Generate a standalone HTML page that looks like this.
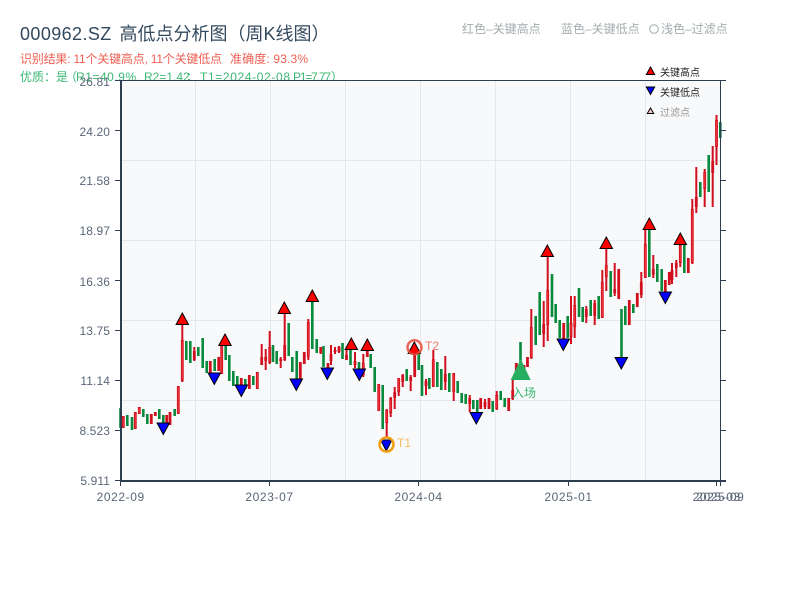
<!DOCTYPE html>
<html><head><meta charset="utf-8"><style>
html,body{margin:0;padding:0;background:#fff;width:800px;height:600px;overflow:hidden}
svg{display:block}
text{font-family:"Liberation Sans","Noto Sans CJK SC",sans-serif}
</style></head><body>
<svg width="800" height="600" viewBox="0 0 800 600" xmlns="http://www.w3.org/2000/svg">
<rect width="800" height="600" fill="#fff"/>
<text x="20" y="40" font-size="18" fill="#34495e" letter-spacing=".4">000962.SZ</text>
<text x="119.500" y="40" font-size="18" fill="#34495e">高低点分析图（周K线图）</text>
<text x="20" y="63" font-size="12" fill="#ee5f52" textLength="202">识别结果: 11个关键高点, 11个关键低点</text>
<text x="230" y="63" font-size="12" fill="#ee5f52" textLength="78">准确度: 93.3%</text>
<text x="20" y="81" font-size="12" fill="#3bb873">优质：是</text>
<text x="65" y="81" font-size="12" fill="#3bb873">（</text>
<text x="76" y="81" font-size="12" fill="#3bb873" textLength="64">R1=40.9%,</text>
<text x="144" y="81" font-size="12" fill="#3bb873">R2=1.42</text>
<text x="186" y="81" font-size="12" fill="#3bb873">；</text>
<text x="200" y="81" font-size="12" fill="#3bb873" textLength="90">T1=2024-02-08</text>
<text x="293" y="81" font-size="12" fill="#3bb873" textLength="38">P1=7.77</text>
<text x="331" y="81" font-size="12" fill="#3bb873">）</text>
<text x="462" y="33" font-size="12" fill="#a3adae">红色–关键高点</text>
<text x="561" y="33" font-size="12" fill="#a3adae">蓝色–关键低点</text>
<circle cx="654" cy="29" r="4.300" fill="none" stroke="#a3adae"/>
<text x="661" y="33" font-size="12" fill="#a3adae">浅色–过滤点</text>

<rect x="121" y="81" width="599" height="400" fill="#f8f9fa"/>
<path d="M121 160.500H720M121 240.500H720M121 320.500H720M121 400.500H720M195.500 81V481M270.500 81V481M345.500 81V481M420.500 81V481M495.500 81V481M570.500 81V481M645.500 81V481" stroke="#e4e7ec" stroke-width="1" fill="none"/>

<path stroke="#078a3b" stroke-width="2.600" fill="none" d="M120.500 408V428M127.300 415V426M132 417V430M143.300 409V417M147.300 414V424M159.300 409V419M163.300 415V424M174.700 409V416M186.300 341V360M190.300 341V363M198.300 347V356M202.700 338V368M206.700 361V373M214.700 359V371M225.700 346V360M229.300 355V381M233.300 371V386M237.300 376V386M245.300 379V389M253.300 376V385M273 345V362M276.700 351V364M288.700 323V356M292.300 357V372M296.700 351V380M312.300 302V349M316.700 339V353M323.500 346V367M342.500 343V359M350.500 349V365M359 362V377M370.700 354V368M374.700 367V392M382.700 385V429M406.700 369V381M418.700 353V370M422 365V396M429.300 378V389M437.300 362V387M441.300 369V390M449.300 373V392M457.700 381V393M461.700 393V403M465.700 394V404M473.300 400V409M477.300 400V412M492.700 401V412M500.700 391V400M504.700 398V407M520.500 342V373M535.700 316V345M539.700 292V335M552 274V317M555.700 304V323M559.700 320V338M567.700 316V338M579 288V317M582.700 307V322M590.700 300V316M598.700 296V319M610.700 271V297M621.500 309V360M625.300 306V325M633.300 304V313M649.300 229V277M657.300 264V282M661.700 269V291M684.300 244V273M700.300 182V197M708.700 155V192M720.300 122V138"/>

<path stroke="#d0101f" stroke-width="2" fill="none" d="M182.300 320V382M194.300 347V361M261.700 344V365M265.700 349V370M269.700 331V364M280.700 357V368M284.700 313V361M308.300 319V360M320.700 347V354M331 345V365M335 347V354M339 346V353M346.500 348V360M355 352V368M363.300 354V377M367.300 350V357M386.700 409V437M390.700 397V417M394.700 387V409M398.700 378V396M402.700 374V387M410.700 375V391M414.700 350V377M426 379V395M433.300 350V387M445.300 356V390M453.700 373V401M469.700 395V412M485 399V409M496.700 391V410M512.700 380V400M531.300 309V359M543.700 301V347M547.700 257V341M563.700 323V340M571 296V344M574.700 296V338M586.300 306V323M594.700 300V325M602.300 270V318M606.300 248V291M614.700 263V296M618.700 269V299M641.300 272V298M645.300 228V278M653.300 255V278M672 263V284M676.300 260V277M680.300 240V267M692.300 199V264M696.300 167V213M704.700 169V207M712.700 146V207M716.500 115V165"/>
<path stroke="#d0101f" stroke-width="2.800" fill="none" d="M123.300 416V428M135.300 412V429M139.300 407V414M151.300 414V424M155.300 412V416M166.700 415V425M170 412V425M178.300 386V414M182.300 340V381M194.300 351V360M210.300 361V373M218.700 357V371M221.700 343V374M241.300 378V389M249.300 375V389M257.300 372V389M261.700 357V365M265.700 357V361M269.700 347V363M280.700 359V361M284.700 345V360M300.300 362V382M304.300 352V364M308.300 322V357M320.700 347V353M328 363V368M331 354V361M335 350V352M339 347V352M346.500 355V360M355 361V365M363.300 363V375M367.300 350V357M378.700 384V411M386.700 410V423M390.700 398V413M394.700 392V398M398.700 378V392M402.700 375V382M410.700 377V381M414.700 353V377M426 381V386M433.300 359V387M445.300 374V382M453.700 373V392M469.700 398V404M480.700 398V409M485 402V407M489 398V409M496.700 395V409M508.700 398V411M512.700 390V399M516.300 363V377M524 365V372M527.500 357V367M531.300 327V358M543.700 324V334M547.700 290V325M563.700 323V340M571 323V337M574.700 305V327M586.300 309V317M594.700 303V316M602.300 282V318M606.300 265V277M614.700 289V293M618.700 269V299M629.300 300V325M637.300 293V307M641.300 282V295M645.300 244V278M653.300 269V275M665.300 280V292M669.300 272V285M672 270V280M676.300 263V268M680.300 245V263M688.300 258V273M692.300 209V263M696.300 197V207M704.700 172V189M712.700 161V173M716.500 120V147"/>
<path stroke="#f0353a" stroke-width="1" fill="none" d="M123.300 417V427M135.300 413V428M139.300 408V413M178.300 387V413M182.300 341V380M221.700 344V373M257.300 373V388M269.700 348V362M308.300 323V356M363.300 364V374M378.700 385V410M386.700 411V422M390.700 399V412M398.700 379V391M433.300 360V386M453.700 374V391M496.700 396V408M531.300 328V357M547.700 291V324M574.700 306V326M602.300 283V317M645.300 245V277M692.300 210V262M704.700 173V188M716.500 121V146M680.300 246V262M606.300 266V276M571 324V336"/>

<!-- axes -->
<path stroke="#2c3e50" fill="none" d="M120.500 80.500H726M720.500 80.500V481"/>
<path stroke="#2c3e50" stroke-width="2" fill="none" d="M121 80V482M120 481H726"/>
<path stroke="#2c3e50" stroke-width="1" fill="none" d="M115 80.500H121M115 130.500H121M115 180.500H121M115 230.500H121M115 280.500H121M115 330.500H121M115 380.500H121M115 430.500H121M115 480.500H121M720 130.500H726M720 180.500H726M720 230.500H726M720 280.500H726M720 330.500H726M720 380.500H726M720 430.500H726M120.500 481V486M269.500 481V486M418.500 481V486M568.500 481V486M716.500 481V486M720.500 481V486"/>

<g font-size="12" fill="#5b6778" text-anchor="end" letter-spacing=".1">
<text x="110" y="86">26.81</text><text x="110" y="136">24.20</text><text x="110" y="185">21.58</text><text x="110" y="235">18.97</text><text x="110" y="286">16.36</text><text x="110" y="335">13.75</text><text x="110" y="385">11.14</text><text x="110" y="435">8.523</text><text x="110" y="485">5.911</text>
</g>
<g font-size="12" fill="#5b6778" text-anchor="middle" letter-spacing=".6">
<text x="120.700" y="501">2022-09</text><text x="269.500" y="501">2023-07</text><text x="418.500" y="501">2024-04</text><text x="568.500" y="501">2025-01</text><text x="716.700" y="501">2025-03</text><text x="720.300" y="501">2025-09</text>
</g>

<!-- high markers -->
<g fill="#ff0000" stroke="#000" stroke-width="1">
<path d="M182.300 313L188.500 324.500H176.100Z"/><path d="M225 334L231.200 345.500H218.800Z"/><path d="M284.300 302L290.500 313.500H278.100Z"/><path d="M312.300 290L318.500 301.500H306.100Z"/><path d="M351.300 338L357.500 349.500H345.100Z"/><path d="M367.300 339L373.500 350.500H361.100Z"/><path d="M414.300 342L420.500 353.500H408.100Z"/><path d="M547.300 245L553.500 256.500H541.100Z"/><path d="M606.300 237L612.500 248.500H600.100Z"/><path d="M649.300 218L655.500 229.500H643.100Z"/><path d="M680.300 233L686.500 244.500H674.100Z"/>
</g>
<!-- low markers -->
<g fill="#0000ff" stroke="#000" stroke-width="1">
<path d="M163.300 434.500L157.100 423H169.500Z"/><path d="M214.300 384.500L208.100 373H220.500Z"/><path d="M241.300 396.500L235.100 385H247.500Z"/><path d="M296.300 390.500L290.100 379H302.500Z"/><path d="M327.300 379.500L321.100 368H333.500Z"/><path d="M359.300 380.500L353.100 369H365.500Z"/><path d="M386.300 451L380.700 440H391.900Z"/><path d="M476.300 424L470.100 412.500H482.500Z"/><path d="M563.300 350.500L557.100 339H569.500Z"/><path d="M621.300 369L615.100 357.500H627.500Z"/><path d="M665.300 303.500L659.100 292H671.500Z"/>
</g>
<circle cx="414.500" cy="347.300" r="7" fill="none" stroke="#e74c3c" stroke-width="2.500" stroke-opacity=".85"/>
<circle cx="386.500" cy="444.500" r="7" fill="none" stroke="#f39c12" stroke-width="2.500"/>
<text x="425" y="350" font-size="12" fill="#ee7a6e">T2</text>
<text x="397" y="447" font-size="12" fill="#f7bd63">T1</text>
<text x="512" y="397" font-size="12" fill="#3bb873">入场</text>
<path d="M520.700 359L530.700 380H510.700Z" fill="#27ae60"/>

<!-- legend -->
<path d="M650.500 67L654.700 74.500H646.300Z" fill="#ff0000" stroke="#000" stroke-width="1"/>
<text x="660" y="76" font-size="10" fill="#222">关键高点</text>
<path d="M650.500 94.500L646.300 87H654.700Z" fill="#0000ff" stroke="#000" stroke-width="1"/>
<text x="660" y="96" font-size="10" fill="#222">关键低点</text>
<path d="M650.500 108L653.700 113.500H647.300Z" fill="#ffcccc" stroke="#000" stroke-width="1"/>
<text x="660" y="116" font-size="10" fill="#999">过滤点</text>
</svg>
</body></html>
